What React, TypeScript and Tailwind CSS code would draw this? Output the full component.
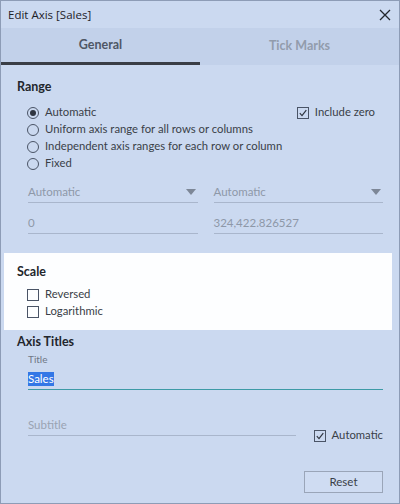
import React, { useState } from "react";

const font = "font-['Lato','Noto_Sans',sans-serif]";

const Radio: React.FC<{ checked?: boolean; label: string }> = ({ checked, label }) => (
  <div className="flex items-center h-[17px] whitespace-nowrap">
    <span className="w-[12px] h-[12px] rounded-full border border-[#4a5466] flex items-center justify-center shrink-0">
      {checked && <span className="w-[6px] h-[6px] rounded-full bg-[#2f3540]" />}
    </span>
    <span className="ml-[6px] text-[11.3px] text-[#3a3f48]">{label}</span>
  </div>
);

const Check: React.FC<{ checked?: boolean; label: string }> = ({ checked, label }) => (
  <div className="flex items-center h-[17px] whitespace-nowrap">
    <span className="w-[12px] h-[12px] border border-[#4a5466] flex items-center justify-center shrink-0">
      {checked && (
        <svg width="10" height="10" viewBox="0 0 10 10">
          <path d="M1.8 5.2 L4 7.6 L8.3 2.2" fill="none" stroke="#2f3540" strokeWidth="1.2" />
        </svg>
      )}
    </span>
    <span className="ml-[6px] text-[11.3px] text-[#3a3f48]">{label}</span>
  </div>
);

const Dropdown: React.FC<{ value: string }> = ({ value }) => (
  <div className="flex items-center justify-between h-[22px] border-b border-[#a9b6cc] text-[11.5px] text-[#8e98a8]">
    <span>{value}</span>
    <svg width="10" height="6" viewBox="0 0 10 6" className="mr-[2px]">
      <path d="M0 0 L10 0 L5 6 Z" fill="#7d8797" />
    </svg>
  </div>
);

const Field: React.FC<{ value: string }> = ({ value }) => (
  <div className="flex items-center h-[22px] border-b border-[#a9b6cc] text-[11.5px] text-[#8e98a8]">
    <span>{value}</span>
  </div>
);

export default function App() {
  const [tab] = useState("general");

  return (
    <div className={`w-[400px] h-[504px] bg-[#cbd9f0] border border-[#8d9cb6] flex flex-col ${font}`}>
      {/* barra de título */}
      <div className="h-[27px] flex items-center justify-between pl-[7px] pr-[8px]">
        <span className="font-['Open_Sans',sans-serif] text-[11.5px] text-[#1e2228]">Edit Axis [Sales]</span>
        <svg width="12" height="12" viewBox="0 0 12 12">
          <path d="M1 1 L11 11 M11 1 L1 11" stroke="#22262c" strokeWidth="1.3" />
        </svg>
      </div>

      {/* abas */}
      <div className="h-[37px] grid grid-cols-2 bg-[#c2d1ea]">
        <div
          className={`flex items-center justify-center text-[12.5px] font-bold border-b-[3px] ${
            tab === "general" ? "border-[#3a3e46] text-[#4f5765]" : "border-transparent"
          }`}
        >
          General
        </div>
        <div className="flex items-center justify-center text-[12.5px] font-bold text-[#929cac]">Tick Marks</div>
      </div>

      {/* Range */}
      <div className="px-[16px] pt-[13px]">
        <div className="text-[12.5px] font-bold text-[#22262c] h-[17px] leading-[17px]">Range</div>
        <div className="flex justify-between pl-[10px] pr-[8px] mt-[9px]">
          <div className="flex flex-col">
            <Radio checked label="Automatic" />
            <Radio label="Uniform axis range for all rows or columns" />
            <Radio label="Independent axis ranges for each row or column" />
            <Radio label="Fixed" />
          </div>
          <div>
            <Check checked label="Include zero" />
          </div>
        </div>

        <div className="grid grid-cols-2 gap-x-[16px] pl-[11px] mt-[9px]">
          <Dropdown value="Automatic" />
          <Dropdown value="Automatic" />
        </div>
        <div className="grid grid-cols-2 gap-x-[16px] pl-[11px] mt-[9px]">
          <Field value="0" />
          <Field value="324,422.826527" />
        </div>
      </div>

      {/* Scale */}
      <div className="ml-[3px] mr-[7px] mt-[19px] h-[77px] bg-[#fdfeff] px-[13px] pt-[10px]">
        <div className="text-[12.5px] font-bold text-[#22262c] h-[17px] leading-[17px]">Scale</div>
        <div className="pl-[10px] mt-[6px]">
          <Check label="Reversed" />
          <Check label="Logarithmic" />
        </div>
      </div>

      {/* Axis Titles */}
      <div className="px-[16px] pt-[3px]">
        <div className="text-[12.5px] font-bold text-[#22262c] h-[17px] leading-[17px]">Axis Titles</div>
        <div className="pl-[11px]">
          <div className="text-[10px] text-[#6f7785] h-[16px] leading-[16px] mt-[1px]">Title</div>
          <div className="flex items-center h-[22px] border-b-[1.5px] border-[#3d9aa6] mt-[1px]">
            <span className="bg-[#3377e6] text-white text-[11.5px] leading-[14px]">Sales</span>
          </div>
          <div className="flex items-end mt-[24px]">
            <div className="w-[270px] flex items-center h-[22px] border-b border-[#a9b6cc] text-[11.5px] text-[#9aa3b2]">
              Subtitle
            </div>
            <div className="ml-[18px] -mb-[8px]">
              <Check checked label="Automatic" />
            </div>
          </div>
        </div>
        <div className="flex justify-end mt-[35px]">
          <button className="w-[79px] h-[22px] border border-[#9aa5b8] bg-[#cfdcf2] text-[11.5px] text-[#3a3f48]">
            Reset
          </button>
        </div>
      </div>
    </div>
  );
}
